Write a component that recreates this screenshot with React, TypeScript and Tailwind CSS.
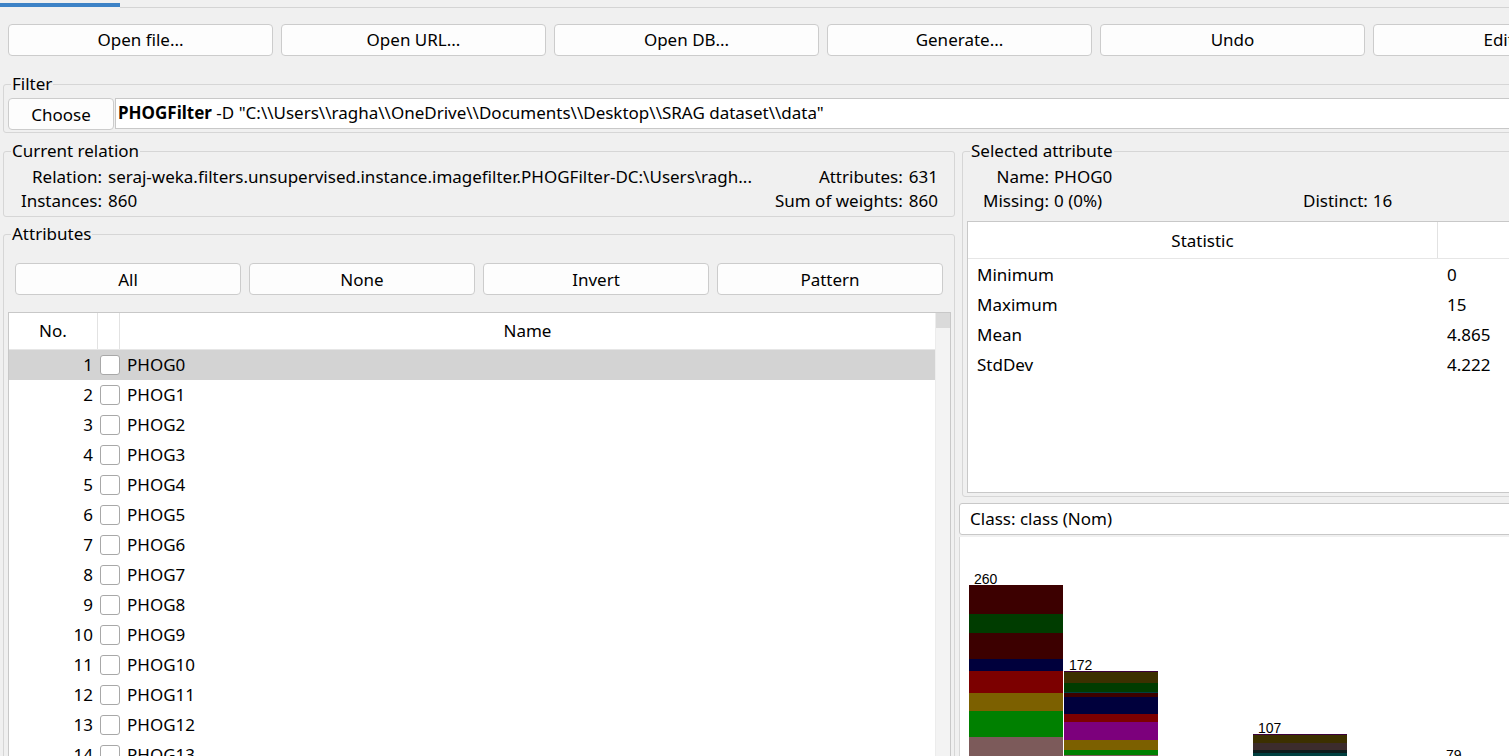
import React from "react";

const toolbar = ["Open file...", "Open URL...", "Open DB...", "Generate...", "Undo", "Edit..."];
const selectButtons = ["All", "None", "Invert", "Pattern"];

const stats = [
  { name: "Minimum", value: "0" },
  { name: "Maximum", value: "15" },
  { name: "Mean", value: "4.865" },
  { name: "StdDev", value: "4.222" },
];

// stripes are [top, bottom, colour] in chart coordinates
const bars: { x: number; label: string; labelY: number; stripes: [number, number, string][] }[] = [
  {
    x: 9,
    label: "260",
    labelY: 47,
    stripes: [
      [48, 77, "#3c0000"],
      [77, 96, "#003c00"],
      [96, 122, "#3c0000"],
      [122, 134, "#00003c"],
      [134, 156, "#7c0000"],
      [156, 174, "#7c6000"],
      [174, 200, "#008000"],
      [200, 260, "#7c5a5a"],
    ],
  },
  {
    x: 104,
    label: "172",
    labelY: 133,
    stripes: [
      [134, 135, "#3c003c"],
      [135, 146, "#3c3000"],
      [146, 155, "#003c00"],
      [155, 156, "#004040"],
      [156, 160, "#3c0000"],
      [160, 177, "#00003c"],
      [177, 185, "#7c0000"],
      [185, 203, "#7c007c"],
      [203, 213, "#7c6000"],
      [213, 218, "#008000"],
      [218, 260, "#7c5a5a"],
    ],
  },
  {
    x: 293,
    label: "107",
    labelY: 196,
    stripes: [
      [197, 198, "#3c003c"],
      [198, 206, "#3c3000"],
      [206, 213, "#3c2c2c"],
      [213, 216, "#0c1c1c"],
      [216, 260, "#004040"],
    ],
  },
  { x: 481, label: "79", labelY: 223, stripes: [[224, 260, "#3c0000"]] },
];

function Button({ label, className = "" }: { label: string; className?: string }) {
  return (
    <button
      type="button"
      className={`h-[32px] shrink-0 rounded-[4px] border border-[#cccccc] bg-[#fdfdfd] text-[17px] leading-none text-black ${className}`}
    >
      {label}
    </button>
  );
}

function Histogram() {
  return (
    <svg width="560" height="240" shapeRendering="crispEdges" className="block">
      {bars.map((b) => (
        <g key={b.label}>
          {b.stripes.map(([top, bottom, color]) => (
            <rect key={top} x={b.x} y={top} width={94} height={bottom - top} fill={color} />
          ))}
          <text
            x={b.x + 5}
            y={b.labelY}
            fontSize="14"
            fontFamily="'Liberation Sans', Arial, sans-serif"
            fill="#000"
          >
            {b.label}
          </text>
        </g>
      ))}
    </svg>
  );
}

export default function App() {
  const rows = Array.from({ length: 14 }, (_, i) => ({ no: i + 1, name: `PHOG${i}` }));

  return (
    <div className="h-[756px] w-[1509px] overflow-hidden bg-[#f0f0f0] font-['Noto_Sans','Open_Sans',sans-serif] text-[17px] text-black">
      {/* tab strip */}
      <div className="flex h-[8px] items-start">
        <div className="mt-[3px] h-[4px] w-[120px] bg-[#3d82c6]" />
        <div className="mt-[7px] h-px flex-1 bg-[#d4d4d4]" />
      </div>

      {/* toolbar */}
      <div className="mt-[16px] flex gap-[8px] pl-[8px]">
        {toolbar.map((t) => (
          <Button key={t} label={t} className="w-[265px] pb-[2px]" />
        ))}
      </div>

      {/* filter */}
      <fieldset className="ml-[3px] mt-[18px] w-[1540px] rounded-[3px] border border-[#d6d6d6] pb-[2px] pl-[4px]">
        <legend className="ml-[3px] px-[1px] leading-[20px]">Filter</legend>
        <div className="mt-[4px] flex items-start">
          <Button label="Choose" className="h-[31px] w-[106px] rounded-[3px]" />
          <div className="ml-px flex h-[31px] flex-1 items-center border border-[#c8c8c8] bg-white pb-[2px] pl-[2px] whitespace-nowrap">
            <span className="font-bold">PHOGFilter</span>
            <span>&nbsp;-D "C:\\Users\\ragha\\OneDrive\\Documents\\Desktop\\SRAG dataset\\data"</span>
          </div>
        </div>
      </fieldset>

      <div className="flex">
        {/* left column */}
        <div className="w-[957px] shrink-0">
          <fieldset className="ml-[3px] mt-[8px] w-[952px] rounded-[3px] border border-[#d6d6d6] pb-[3px]">
            <legend className="ml-[7px] px-[1px] leading-[20px]">Current relation</legend>
            <div className="mt-[4px] grid grid-cols-[98px_1fr_auto_auto] gap-x-[6px] pr-[16px] leading-[24px] whitespace-nowrap">
              <span className="text-right">Relation:</span>
              <span className="overflow-hidden">seraj-weka.filters.unsupervised.instance.imagefilter.PHOGFilter-DC:\Users\ragh...</span>
              <span className="text-right">Attributes:</span>
              <span>631</span>
              <span className="text-right">Instances:</span>
              <span>860</span>
              <span className="text-right">Sum of weights:</span>
              <span>860</span>
            </div>
          </fieldset>

          <fieldset className="ml-[3px] mt-[7px] w-[952px] rounded-[3px] border border-[#d6d6d6] pl-[4px] pr-[3px]">
            <legend className="ml-[3px] px-[1px] leading-[20px]">Attributes</legend>
            <div className="mt-[19px] flex gap-[8px] pl-[7px]">
              {selectButtons.map((b) => (
                <Button key={b} label={b} className="w-[226px]" />
              ))}
            </div>

            <div className="mt-[17px] flex h-[460px] border border-[#c8c8c8] bg-white">
              <div className="flex-1">
                <div className="flex h-[37px] border-b border-[#e6e6e6] leading-[36px]">
                  <div className="w-[89px] border-r border-[#e2e2e2] text-center">No.</div>
                  <div className="w-[22px] border-r border-[#e2e2e2]" />
                  <div className="flex-1 text-center">Name</div>
                </div>
                {rows.map((r) => (
                  <div
                    key={r.no}
                    className={`flex h-[30px] items-center ${r.no === 1 ? "bg-[#d3d3d3]" : "bg-white"}`}
                  >
                    <div className="w-[84px] text-right">{r.no}</div>
                    <div className="ml-[7px] h-[20px] w-[20px] rounded-[3px] border border-[#a8a8a8] bg-white" />
                    <div className="ml-[7px]">{r.name}</div>
                  </div>
                ))}
              </div>
              <div className="w-[15px] border-l border-[#ececec] bg-[#f3f3f3]">
                <div className="h-[15px] bg-[#dadada]" />
              </div>
            </div>
          </fieldset>
        </div>

        {/* right column */}
        <div className="ml-[2px] w-[700px] shrink-0">
          <fieldset className="ml-[3px] mt-[8px] w-[690px] rounded-[3px] border border-[#d6d6d6] pb-[3px] pl-[4px]">
            <legend className="ml-[3px] px-[1px] leading-[20px]">Selected attribute</legend>
            <div className="mt-[4px] grid grid-cols-[82px_244px_auto_1fr] gap-x-[5px] leading-[24px] whitespace-nowrap">
              <span className="text-right">Name:</span>
              <span className="col-span-3">PHOG0</span>
              <span className="text-right">Missing:</span>
              <span>0 (0%)</span>
              <span className="text-right">Distinct:</span>
              <span>16</span>
            </div>

            <div className="mt-[8px] h-[272px] border border-[#c8c8c8] bg-white">
              <div className="flex h-[37px] border-b border-[#e6e6e6] leading-[37px]">
                <div className="w-[470px] border-r border-[#e2e2e2] text-center">Statistic</div>
                <div className="flex-1 text-center">Value</div>
              </div>
              <div className="pt-[1px]">
                {stats.map((s) => (
                  <div key={s.name} className="flex h-[30px] items-center">
                    <div className="w-[479px] pl-[9px]">{s.name}</div>
                    <div>{s.value}</div>
                  </div>
                ))}
              </div>
            </div>
          </fieldset>

          <div className="mt-[6px] flex h-[32px] w-[700px] items-center rounded-[3px] border border-[#c8c8c8] bg-white pl-[10px]">
            Class: class (Nom)
          </div>
          <div className="mt-[2px] h-[240px] overflow-hidden border-l border-[#d8d8d8] bg-white">
            <Histogram />
          </div>
        </div>
      </div>
    </div>
  );
}
